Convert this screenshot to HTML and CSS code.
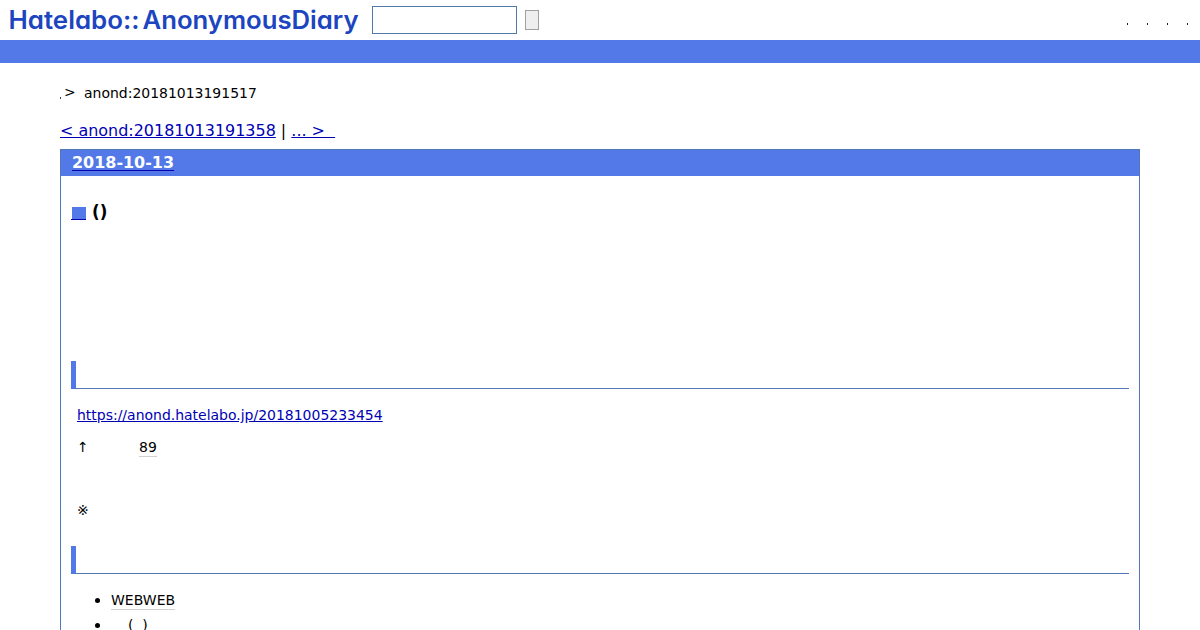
FILE: index.html
```html
<!DOCTYPE html>
<html lang="ja">
<head>
    <meta charset="UTF-8">
    <meta name="viewport" content="width=device-width, initial-scale=1.0">
    <title>anond:20181013191517</title>
    <link rel="stylesheet" href="styles.css">
</head>
<body>
    <div class="header">
        <a class="logo" href="#">
            <svg width="364" height="40" viewBox="0 0 364 40">
                <text x="8.5" y="28.7" textLength="131" lengthAdjust="spacingAndGlyphs">Hatelabo::</text>
                <text x="142.5" y="28.7" textLength="216" lengthAdjust="spacingAndGlyphs">AnonymousDiary</text>
            </svg>
        </a>
        <form class="search">
            <input type="text" class="search-word">
            <button type="button" class="search-button"></button>
        </form>
        <ul class="guide">
            <li></li>
            <li></li>
            <li></li>
            <li></li>
        </ul>
    </div>
    <div class="bar"></div>

    <div class="container">
        <p class="breadcrumb"><span class="dot"></span><span class="arrow">&gt;</span>anond:20181013191517</p>
        <div class="pager"><a href="#">&lt; anond:20181013191358</a> | <a href="#">... &gt;&nbsp;&nbsp;</a></div>

        <div class="day">
            <h2><a href="#">2018-10-13</a></h2>
            <div class="section">
                <h3><a class="permalink" href="#"><span class="square"></span></a>()</h3>
                <h4></h4>
                <p><a href="#">https://anond.hatelabo.jp/20181005233454</a></p>
                <p class="count"><span class="up">↑</span><span class="keyword">89</span></p>
                <p class="note">※</p>
                <h4></h4>
                <ul class="list">
                    <li><span class="keyword">WEBWEB</span></li>
                    <li><span class="parens">(&nbsp;&nbsp;)</span></li>
                </ul>
            </div>
        </div>
    </div>
</body>
</html>
```

FILE: styles.css
```css
* {
    box-sizing: border-box;
    margin: 0;
    padding: 0;
}

body {
    height: 630px;
    overflow: hidden;
    background: #fff;
    color: #000;
    font-family: "DejaVu Sans", "Noto Sans CJK JP", sans-serif;
    font-size: 14px;
}

a {
    color: #0000b4;
}

.header {
    display: flex;
    height: 40px;
}

.logo svg {
    display: block;
}

.logo text {
    fill: #1c45bf;
    font-family: "Inter", sans-serif;
    font-size: 25px;
    font-weight: 600;
    font-feature-settings: "cv11";
}

.search {
    display: flex;
    align-items: center;
    gap: 8px;
    padding-left: 8px;
}

.search-word {
    width: 145px;
    height: 28px;
    border: 1px solid #5279aa;
}

.search-button {
    width: 14px;
    height: 20px;
    border: 1px solid #a0a0a0;
    background: #efefef;
}

.guide {
    display: flex;
    gap: 19px;
    margin-left: auto;
    padding: 23px 12px 0 0;
    list-style: none;
}

.guide li {
    width: 1px;
    height: 2px;
    background: #222;
}

.bar {
    height: 23px;
    background: #5279e7;
}

.container {
    padding: 0 60px;
}

.breadcrumb {
    display: flex;
    height: 56px;
    padding-top: 20px;
    font-size: 13.97px;
    line-height: 20px;
}

.dot {
    width: 1px;
    height: 2px;
    margin: 14px 3px 0 0;
    background: #444;
}

.arrow {
    width: 20px;
    margin-top: -1px;
}

.pager {
    height: 30px;
    font-size: 15.96px;
    line-height: 24px;
}

.day {
    height: 481px;
    border: 1px solid #5279b7;
    border-bottom: 0;
}

.day h2 {
    height: 26px;
    padding-left: 11px;
    background: #5279e7;
    font-size: 15.96px;
    line-height: 25px;
}

.day h2 a {
    color: #fff;
    text-decoration-color: #0000b4;
    text-underline-offset: 2px;
}

.section {
    padding: 24px 10px 0;
}

.section h3 {
    display: flex;
    height: 161px;
    font-size: 16.8px;
    line-height: 24px;
}

.permalink {
    width: 15px;
    height: 20px;
    margin-right: 6px;
    padding: 7px 0 0 1px;
    border-bottom: 1px solid #0000b4;
}

.square {
    display: block;
    height: 12px;
    background: #5279e7;
}

.section h4 {
    height: 28px;
    border-left: 5px solid #5279e7;
    border-bottom: 1px solid #5279b7;
}

.section p {
    height: 32px;
    padding-left: 6px;
    font-size: 13.97px;
    line-height: 20px;
}

.section h4 + p {
    height: 48px;
    padding-top: 16px;
}

.section .count {
    display: flex;
    height: 63px;
}

.up {
    width: 62px;
}

.keyword {
    height: 20px;
    border-bottom: 1px solid #d0d0d0;
}

.section .note {
    height: 46px;
}

.list {
    padding: 14px 0 0 40px;
    line-height: 25px;
}

.list li::marker {
    font-size: 15px;
}

.list .keyword {
    padding-bottom: 1px;
}

.parens {
    padding-left: 17px;
}
```
